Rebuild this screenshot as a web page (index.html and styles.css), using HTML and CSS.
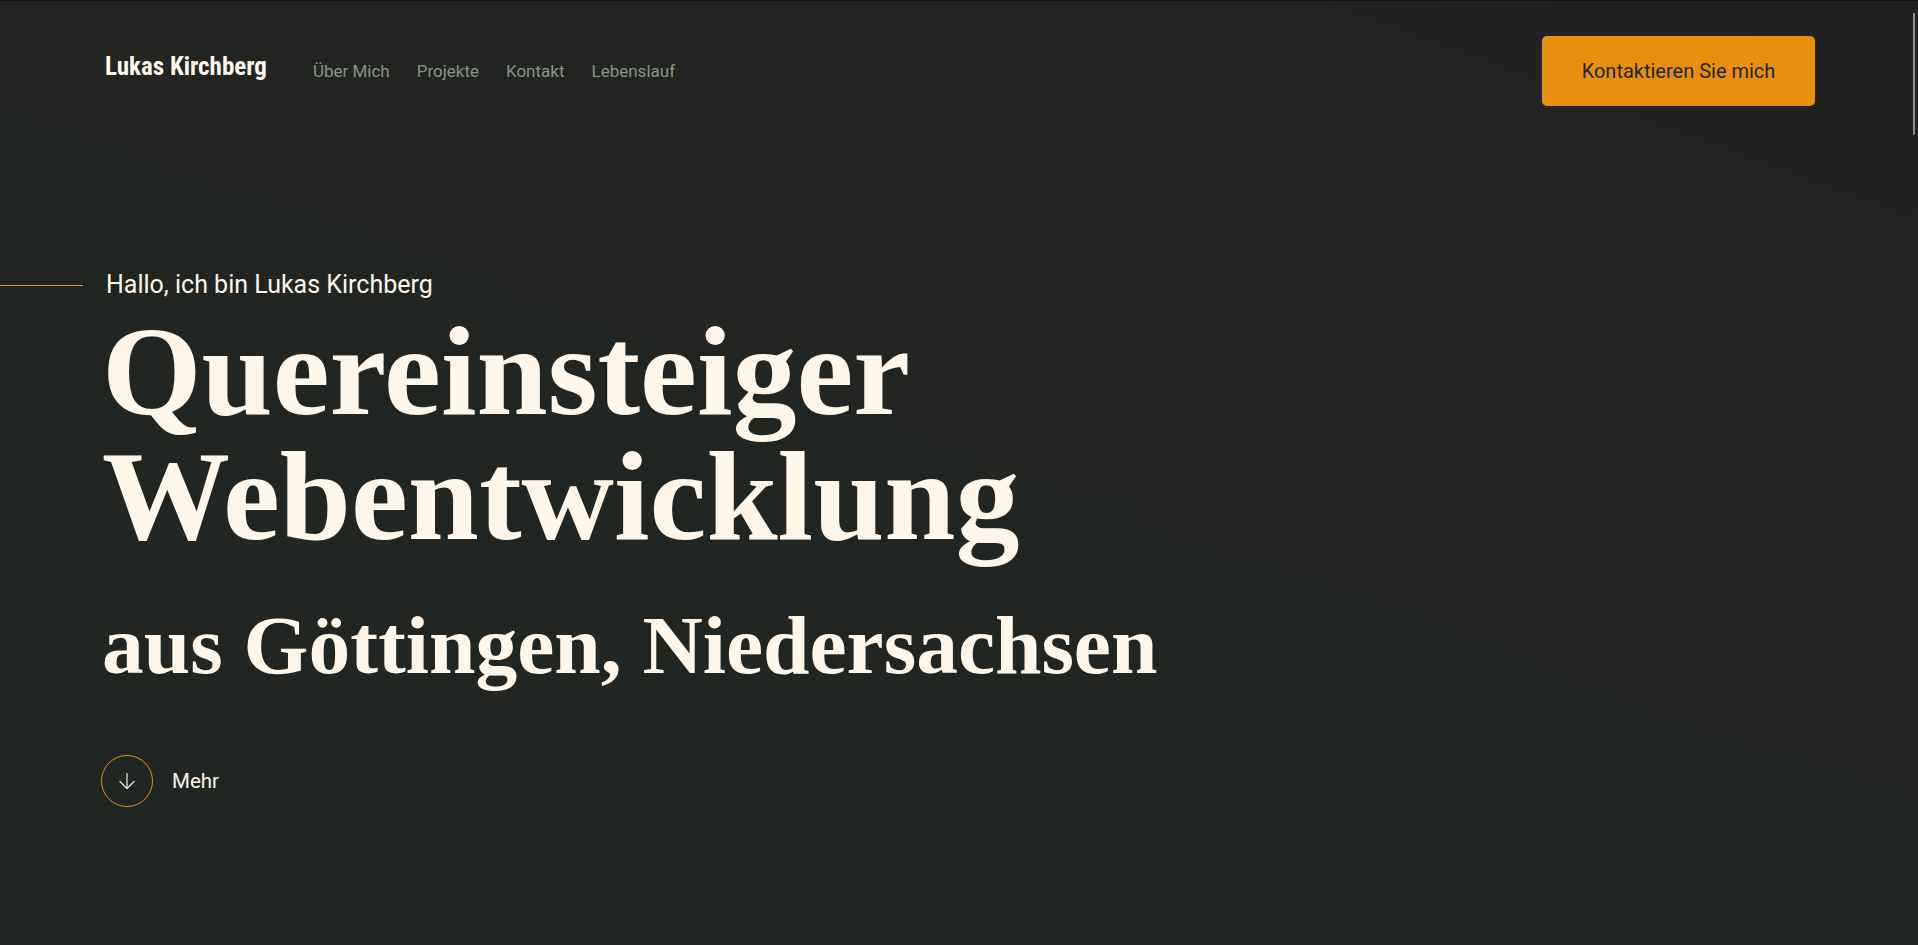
FILE: index.html
```html
<!DOCTYPE html>
<html lang="de">
<head>
<meta charset="utf-8">
<title>Lukas Kirchberg – Quereinsteiger Webentwicklung</title>
<link rel="stylesheet" href="styles.css">
</head>
<body>
<div class="page">
  <header class="header">
    <div class="brand">
      <a class="logo" href="#">Lukas Kirchberg</a>
      <nav class="nav">
        <a href="#">Über Mich</a>
        <a href="#">Projekte</a>
        <a href="#">Kontakt</a>
        <a href="#">Lebenslauf</a>
      </nav>
    </div>
    <a class="cta" href="#">Kontaktieren Sie mich</a>
  </header>

  <main class="hero">
    <p class="eyebrow"><span class="eyebrow-line"></span><span>Hallo, ich bin Lukas Kirchberg</span></p>
    <h1 class="title"><span class="title-line">Quereinsteiger</span><span class="title-line">Webentwicklung</span></h1>
    <h2 class="subtitle">aus Göttingen, Niedersachsen</h2>
    <a class="more" href="#">
      <span class="more-circle">
        <svg width="18" height="18" viewBox="0 0 18 18" fill="none" stroke="#f3ecdf" stroke-width="1.2" stroke-linecap="round" stroke-linejoin="round">
          <path d="M9 1.5V16.5"/>
          <path d="M2 9.5L9 16.5L16 9.5"/>
        </svg>
      </span>
      <span class="more-label">Mehr</span>
    </a>
  </main>
  <div class="scroll-thumb"></div>
</div>
</body>
</html>
```

FILE: styles.css
```css
* { box-sizing: border-box; }

html, body {
  margin: 0;
  padding: 0;
  height: 100%;
  overflow: hidden;
}

body {
  background: #222523;
  font-family: Roboto, "Liberation Sans", sans-serif;
  color: #fdf6e9;
}

.page {
  position: relative;
  min-height: 100vh;
  border-top: 1px solid #111312;
  background: linear-gradient(200deg, #212121 0%, #222422 30%, #212622 70%, #202621 100%);
}

a { text-decoration: none; color: inherit; }

.header {
  display: flex;
  align-items: center;
  justify-content: space-between;
  padding: 35px 103px 0 105px;
}

.brand {
  display: flex;
  align-items: center;
  gap: 46px;
}

.logo {
  font-family: "Roboto Condensed", Roboto, sans-serif;
  font-weight: 700;
  font-size: 25px;
  color: #fdf6e9;
  line-height: 30px;
  margin-bottom: 9px;
}

.nav {
  display: flex;
  gap: 27px;
  font-size: 17px;
  line-height: 24px;
  color: #869584;
}

.cta {
  display: flex;
  align-items: center;
  justify-content: center;
  width: 273px;
  height: 70px;
  background: #e98f10;
  border-radius: 5px;
  color: #252523;
  font-size: 20px;
}

.hero {
  padding: 0 105px;
}

.eyebrow {
  display: flex;
  align-items: center;
  gap: 23px;
  margin: 164px 0 0 -105px;
  font-size: 25px;
  line-height: 30px;
  color: #fdf6e9;
}

.eyebrow-line {
  display: block;
  width: 83px;
  height: 1px;
  background: #ee9212;
}

.title {
  margin: 9px 0 0 -3px;
  font-family: "Liberation Serif", "Times New Roman", serif;
  font-weight: 700;
  font-size: 128px;
  line-height: 125px;
  color: #fdf6e9;
}

.title-line {
  display: block;
}

.subtitle {
  margin: 40px 0 0 -3px;
  font-family: "Liberation Serif", "Times New Roman", serif;
  font-weight: 700;
  font-size: 83.5px;
  line-height: 92px;
  color: #fdf6e9;
}

.more {
  display: inline-flex;
  align-items: center;
  gap: 19px;
  margin-top: 64px;
  margin-left: -4px;
}

.more-circle {
  display: flex;
  align-items: center;
  justify-content: center;
  width: 52px;
  height: 52px;
  border: 1px solid #e98f10;
  border-radius: 50%;
}

.more-label {
  font-size: 20.5px;
  line-height: 26px;
  color: #fdf6e9;
}

.scroll-thumb {
  position: absolute;
  top: 12px;
  right: 3px;
  width: 2px;
  height: 122px;
  border-radius: 1px;
  background: #8c8c8c;
}
```
